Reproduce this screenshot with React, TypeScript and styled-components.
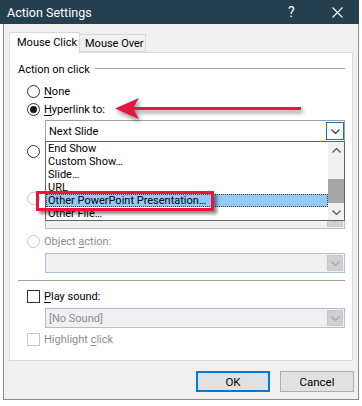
import React from 'react';
import styled, { createGlobalStyle } from 'styled-components';

const FONT = `Roboto, "Liberation Sans", Arial, sans-serif`;

const Global = createGlobalStyle`
  html, body { margin: 0; padding: 0; background: #ffffff; }
  body { font-family: ${FONT}; font-size: 11px; color: #000; }
  * { box-sizing: border-box; }
`;

const Page = styled.div`
  width: 362px;
  height: 406px;
  background: #fff;
  overflow: hidden;
`;

const TitleBar = styled.div`
  width: 359px;
  height: 24px;
  background: #243f4f;
  color: #fff;
  display: flex;
  align-items: center;
  padding-left: 7px;
  font-size: 12.5px;
`;

const TitleText = styled.span`
  flex: 1;
`;

const HelpGlyph = styled.span`
  width: 10px;
  margin-right: 34px;
  font-size: 14px;
`;

const CloseIcon = styled.svg`
  width: 11px;
  height: 11px;
  margin-right: 16px;
`;

const WindowBody = styled.div`
  margin-left: 3px;
  width: 356px;
  height: 376px;
  background: #f0f0f0;
  border: 1px solid #8a8a8a;
  border-top: none;
  padding: 8px 5px 0 5px;
  display: flex;
  flex-direction: column;
`;

const TabStrip = styled.div`
  display: flex;
  align-items: flex-end;
  height: 20px;
  position: relative;
  z-index: 1;
`;

const Tab = styled.div<{ $active?: boolean }>`
  height: ${p => (p.$active ? 21 : 18)}px;
  width: ${p => (p.$active ? 71 : 67)}px;
  margin-bottom: ${p => (p.$active ? -1 : 0)}px;
  margin-left: ${p => (p.$active ? 0 : -1)}px;
  background: ${p => (p.$active ? '#ffffff' : '#f0f0f0')};
  border: 1px solid #d9d9d9;
  border-bottom: ${p => (p.$active ? 'none' : '1px solid #d9d9d9')};
  display: flex;
  align-items: center;
  padding-left: ${p => (p.$active ? 7 : 5)}px;
  padding-bottom: ${p => (p.$active ? 1 : 0)}px;
  font-size: 11px;
  white-space: nowrap;
`;

const Panel = styled.div`
  position: relative;
  width: 344px;
  height: 309px;
  background: #ffffff;
  border: 1px solid #d9d9d9;
  display: flex;
  flex-direction: column;
`;

const GroupHeader = styled.div`
  margin-top: 8px;
  height: 16px;
  padding: 0 7px 0 8px;
  display: flex;
  align-items: center;
`;

const GroupRule = styled.div`
  flex: 1;
  height: 1px;
  background: #a0a0a0;
  margin-left: 5px;
  margin-top: -1px;
`;

const Row = styled.div<{ $top?: number; $disabled?: boolean }>`
  margin-top: ${p => p.$top ?? 0}px;
  height: 18px;
  padding-left: 17px;
  display: flex;
  align-items: center;
  gap: 4px;
  color: ${p => (p.$disabled ? '#8d8d8d' : '#000')};
  white-space: nowrap;
`;

const Radio = styled.span<{ $checked?: boolean; $disabled?: boolean }>`
  width: 13px;
  height: 13px;
  border-radius: 50%;
  border: 1px solid ${p => (p.$disabled ? '#c2c2c2' : '#333333')};
  background: #fff;
  display: flex;
  align-items: center;
  justify-content: center;
  flex: none;
  &::after {
    content: '';
    display: ${p => (p.$checked ? 'block' : 'none')};
    width: 7px;
    height: 7px;
    border-radius: 50%;
    background: #1a1a1a;
  }
`;

const Check = styled.span<{ $disabled?: boolean }>`
  width: 13px;
  height: 13px;
  border: 1px solid ${p => (p.$disabled ? '#c8c8c8' : '#333333')};
  background: #fff;
  flex: none;
`;

const Acc = styled.span`
  text-decoration: underline;
  text-underline-offset: 2px;
`;

const SelectBox = styled.div<{ $top?: number; $disabled?: boolean; $h?: number }>`
  position: relative;
  margin-top: ${p => p.$top ?? 0}px;
  margin-left: 35px;
  width: 300px;
  height: ${p => p.$h ?? 20}px;
  flex: none;
  border: 1px solid ${p => (p.$disabled ? '#a9c0de' : '#a0a0a0')};
  background: ${p => (p.$disabled ? '#f0f0f0' : '#ffffff')};
  color: ${p => (p.$disabled ? '#8d8d8d' : '#000')};
  display: flex;
  align-items: center;
  padding-left: 3px;
`;

const SelectText = styled.span`
  flex: 1;
`;

const DropButton = styled.div<{ $disabled?: boolean }>`
  width: ${p => (p.$disabled ? 16 : 18)}px;
  height: ${p => (p.$disabled ? 16 : 18)}px;
  margin-right: ${p => (p.$disabled ? 1 : 0)}px;
  border: 1px solid ${p => (p.$disabled ? '#c8c8c8' : '#0078d7')};
  background: ${p => (p.$disabled ? '#d0d0d0' : '#ffffff')};
  display: flex;
  align-items: center;
  justify-content: center;
`;

const TextField = styled.div`
  margin-top: 2px;
  margin-left: 35px;
  width: 220px;
  height: 21px;
  border: 1px solid #a0a0a0;
  background: #fff;
`;

const Rule = styled.div<{ $top: number }>`
  margin: ${p => p.$top}px 7px 0 8px;
  height: 1px;
  background: #a0a0a0;
  flex: none;
`;

const ListBox = styled.div`
  position: absolute;
  left: -1px;
  top: 20px;
  width: 300px;
  height: 80px;
  border: 1px solid #646464;
  background: #fff;
  display: flex;
  z-index: 3;
  color: #000;
`;

const ListItems = styled.div`
  flex: 1;
  display: flex;
  flex-direction: column;
`;

const ListItem = styled.div<{ $selected?: boolean }>`
  height: 13px;
  line-height: 13px;
  padding-left: 2px;
  white-space: nowrap;
  background: ${p => (p.$selected ? '#91c9f7' : 'transparent')};
  outline: ${p => (p.$selected ? '1px dotted #5a3a1a' : 'none')};
  outline-offset: -1px;
`;

const ScrollBar = styled.div`
  width: 16px;
  background: #f0f0f0;
  display: flex;
  flex-direction: column;
`;

const ScrollArrow = styled.div<{ $h: number }>`
  height: ${p => p.$h}px;
  display: flex;
  align-items: center;
  justify-content: center;
`;

const ScrollTrack = styled.div`
  flex: 1;
  display: flex;
  flex-direction: column;
`;

const Thumb = styled.div<{ $top: number; $h: number }>`
  margin-top: ${p => p.$top}px;
  height: ${p => p.$h}px;
  background: #a6a6a6;
`;

const RedBox = styled.div`
  position: absolute;
  left: 26px;
  top: 138px;
  width: 178px;
  height: 20px;
  border: 3px solid #e5173f;
  box-shadow: 3px 3px 3px rgba(0, 0, 0, 0.45);
  z-index: 5;
`;

const ArrowSvg = styled.svg`
  position: absolute;
  left: 102px;
  top: 42px;
  width: 200px;
  height: 32px;
  overflow: visible;
  z-index: 5;
  filter: drop-shadow(2px 3px 2px rgba(0, 0, 0, 0.45));
`;

const ButtonRow = styled.div`
  margin-top: 10px;
  margin-right: -1px;
  display: flex;
  justify-content: flex-end;
  gap: 10px;
`;

const DialogButton = styled.div<{ $default?: boolean }>`
  width: 74px;
  height: 21px;
  background: #e1e1e1;
  border: ${p => (p.$default ? '2px solid #0078d7' : '1px solid #adadad')};
  display: flex;
  align-items: center;
  justify-content: center;
  font-size: 11.5px;
`;

const Chevron = ({ color = '#333', up = false }: { color?: string; up?: boolean }) => (
  <svg width="9" height="5" viewBox="0 0 9 5">
    <polyline
      points={up ? '0.5,4.5 4.5,0.5 8.5,4.5' : '0.5,0.5 4.5,4.5 8.5,0.5'}
      fill="none"
      stroke={color}
      strokeWidth="1.2"
    />
  </svg>
);

export default function App() {
  return (
    <Page>
      <Global />
      <TitleBar>
        <TitleText>Action Settings</TitleText>
        <HelpGlyph>?</HelpGlyph>
        <CloseIcon viewBox="0 0 11 11">
          <line x1="0.5" y1="0.5" x2="10.5" y2="10.5" stroke="#fff" strokeWidth="1.1" />
          <line x1="10.5" y1="0.5" x2="0.5" y2="10.5" stroke="#fff" strokeWidth="1.1" />
        </CloseIcon>
      </TitleBar>
      <WindowBody>
        <TabStrip>
          <Tab $active>Mouse Click</Tab>
          <Tab>Mouse Over</Tab>
        </TabStrip>
        <Panel>
          <GroupHeader>
            <span>Action on click</span>
            <GroupRule />
          </GroupHeader>
          <Row $top={5}>
            <Radio />
            <span><Acc>N</Acc>one</span>
          </Row>
          <Row>
            <Radio $checked />
            <span><Acc>H</Acc>yperlink to:</span>
          </Row>
          <SelectBox $top={2} $h={22}>
            <SelectText>Next Slide</SelectText>
            <DropButton>
              <Chevron />
            </DropButton>
            <ListBox>
              <ListItems>
                <ListItem>End Show</ListItem>
                <ListItem>Custom Show…</ListItem>
                <ListItem>Slide…</ListItem>
                <ListItem>URL</ListItem>
                <ListItem $selected>Other PowerPoint Presentation…</ListItem>
                <ListItem>Other File…</ListItem>
              </ListItems>
              <ScrollBar>
                <ScrollArrow $h={17}>
                  <Chevron up color="#555" />
                </ScrollArrow>
                <ScrollTrack>
                  <Thumb $top={20} $h={24} />
                </ScrollTrack>
                <ScrollArrow $h={16}>
                  <Chevron color="#555" />
                </ScrollArrow>
              </ScrollBar>
            </ListBox>
          </SelectBox>
          <Row>
            <Radio />
          </Row>
          <TextField />
          <Row $top={6} $disabled>
            <Radio $disabled />
          </Row>
          <SelectBox $top={2} $disabled>
            <SelectText />
            <DropButton $disabled>
              <Chevron color="#a8a8a8" />
            </DropButton>
          </SelectBox>
          <Row $top={3} $disabled>
            <Radio $disabled />
            <span>Object <Acc>a</Acc>ction:</span>
          </Row>
          <SelectBox $top={3} $disabled>
            <SelectText />
            <DropButton $disabled>
              <Chevron color="#a8a8a8" />
            </DropButton>
          </SelectBox>
          <Rule $top={7} />
          <Row $top={6}>
            <Check />
            <span><Acc>P</Acc>lay sound:</span>
          </Row>
          <SelectBox $top={3} $disabled>
            <SelectText>[No Sound]</SelectText>
            <DropButton $disabled>
              <Chevron color="#a8a8a8" />
            </DropButton>
          </SelectBox>
          <Row $top={2} $disabled>
            <Check $disabled />
            <span>Highlight <Acc>c</Acc>lick</span>
          </Row>
          <ArrowSvg viewBox="0 0 200 32">
            <line x1="20" y1="13.5" x2="189" y2="13.5" stroke="#e5173f" strokeWidth="3" />
            <polygon points="3,13.5 27,3 21,13.5 27,24" fill="#e5173f" />
          </ArrowSvg>
          <RedBox />
        </Panel>
        <ButtonRow>
          <DialogButton $default>OK</DialogButton>
          <DialogButton>Cancel</DialogButton>
        </ButtonRow>
      </WindowBody>
    </Page>
  );
}
